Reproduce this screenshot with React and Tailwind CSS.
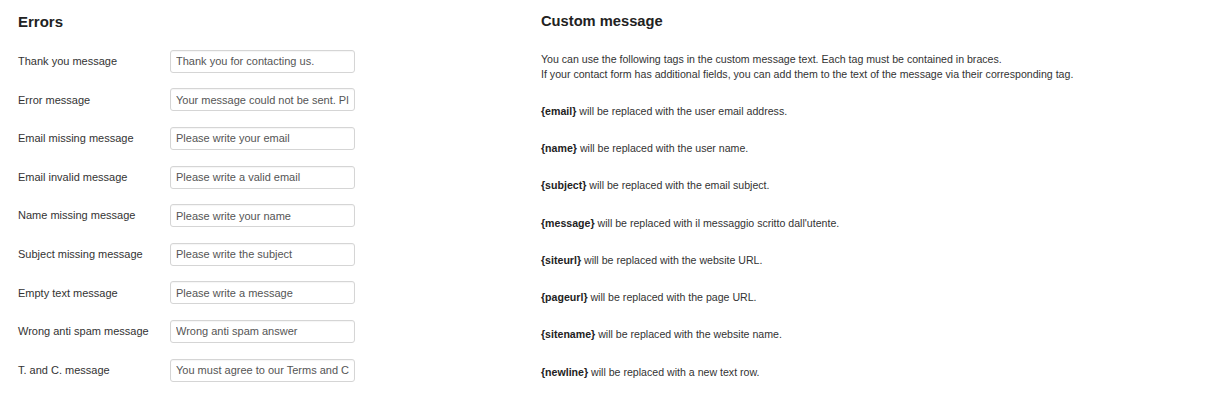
import React from 'react';

const errors = [
  ['Thank you message', 'Thank you for contacting us.'],
  ['Error message', 'Your message could not be sent. Please try again.'],
  ['Email missing message', 'Please write your email'],
  ['Email invalid message', 'Please write a valid email'],
  ['Name missing message', 'Please write your name'],
  ['Subject missing message', 'Please write the subject'],
  ['Empty text message', 'Please write a message'],
  ['Wrong anti spam message', 'Wrong anti spam answer'],
  ['T. and C. message', 'You must agree to our Terms and Conditions'],
];

const tags = [
  ['{email}', 'will be replaced with the user email address.'],
  ['{name}', 'will be replaced with the user name.'],
  ['{subject}', 'will be replaced with the email subject.'],
  ['{message}', "will be replaced with il messaggio scritto dall'utente."],
  ['{siteurl}', 'will be replaced with the website URL.'],
  ['{pageurl}', 'will be replaced with the page URL.'],
  ['{sitename}', 'will be replaced with the website name.'],
  ['{newline}', 'will be replaced with a new text row.'],
];

export default function App() {
  return (
    <div className="w-[1206px] h-[400px] bg-white flex font-['Liberation_Sans',Arial,sans-serif] text-[#333]">
      {/* ERRORS */}
      <div className="w-[541px] pl-[18px] pt-[12px]">
        <h2 className="text-[15px] leading-[19px] font-bold text-[#222]">Errors</h2>
        <div className="mt-[11px] flex flex-col">
          {errors.map(([label, value]) => (
            <div key={label} className="h-[38.6px] flex items-center">
              <span className="w-[152px] text-[11px] text-[#333]">{label}</span>
              <input
                readOnly
                defaultValue={value}
                className="w-[185px] h-[23px] px-[5px] border border-[#d5d5d5] rounded-[3px] text-[11px] text-[#555] shadow-[inset_0_1px_1px_rgba(0,0,0,0.04)] outline-none"
              />
            </div>
          ))}
        </div>
      </div>

      {/* CUSTOM MESSAGE */}
      <div className="flex-1 pt-[12px]">
        <h2 className="text-[14.7px] leading-[19px] font-bold text-[#222]">Custom message</h2>
        <div className="mt-[21px] text-[10.6px] leading-[15px] text-[#333]">
          <p>You can use the following tags in the custom message text. Each tag must be contained in braces.</p>
          <p>If your contact form has additional fields, you can add them to the text of the message via their corresponding tag.</p>
        </div>
        <div className="mt-[11px] flex flex-col">
          {tags.map(([tag, text]) => (
            <div key={tag} className="h-[37.3px] flex items-center text-[10.6px] text-[#333]">
              <span>
                <b className="font-bold text-[#222]">{tag}</b> {text}
              </span>
            </div>
          ))}
        </div>
      </div>
    </div>
  );
}
